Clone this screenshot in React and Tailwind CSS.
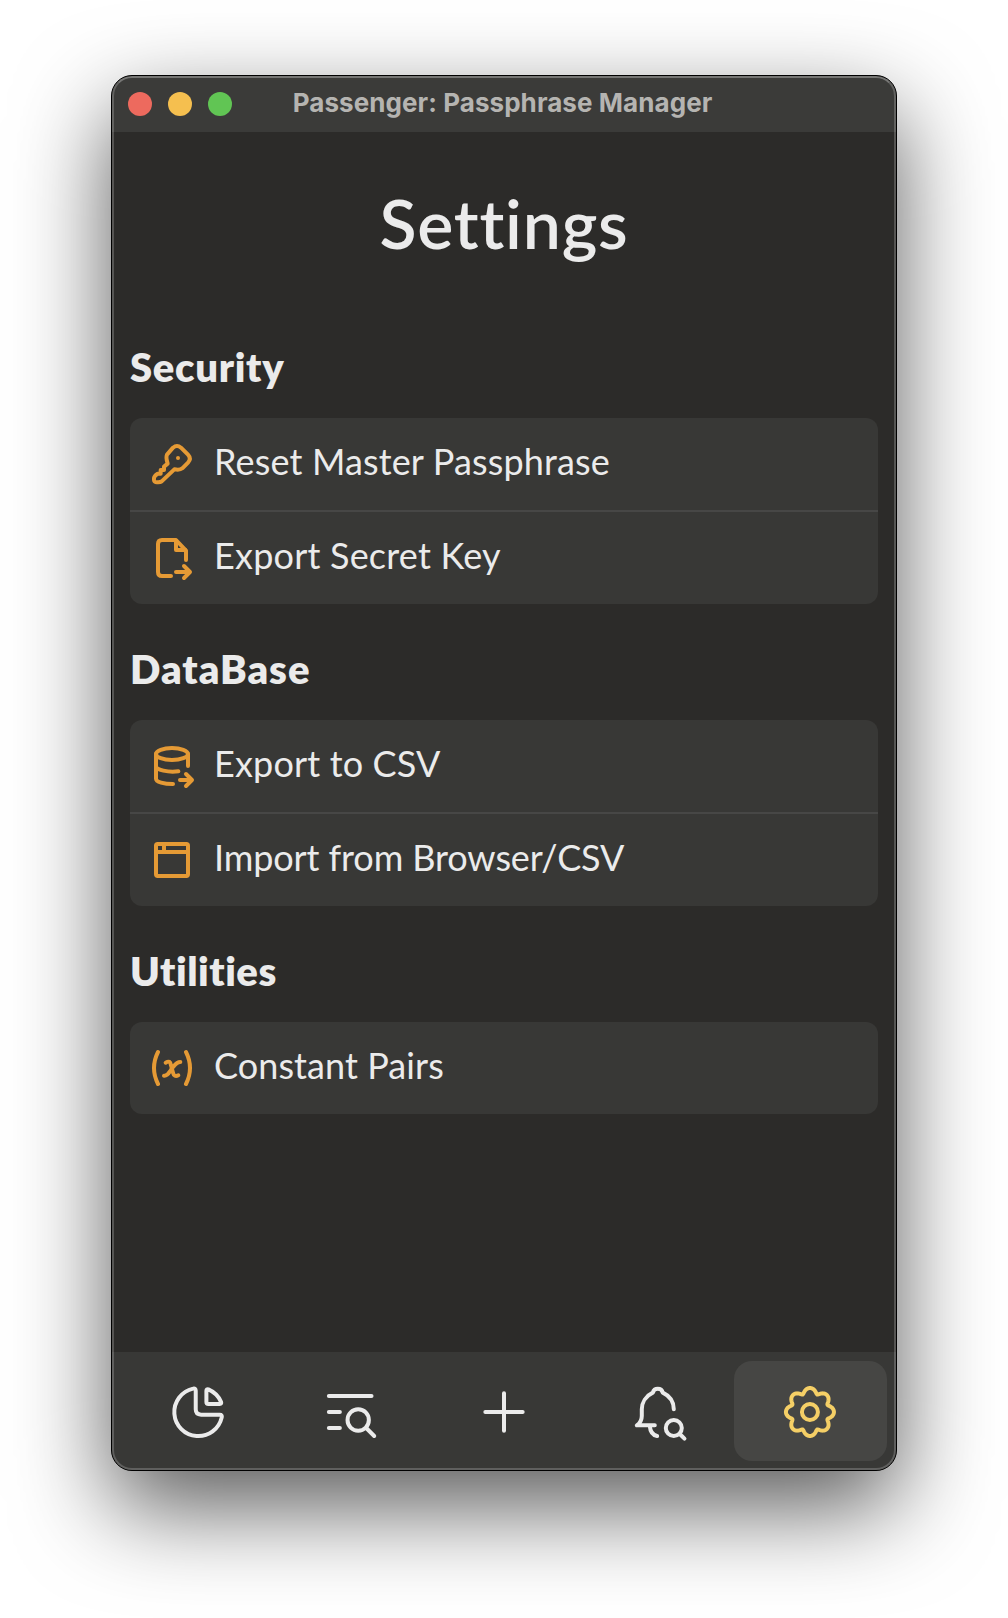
import React from "react";

const gearPath = (() => {
  const pts = [];
  for (let i = 0; i < 240; i++) {
    const t = (i / 240) * Math.PI * 2;
    const a = t + 0.05 * Math.sin(8 * t);
    const r = 64.5 + 7.5 * Math.cos(8 * t);
    pts.push(`${(930 + r * Math.cos(a)).toFixed(2)} ${(216 + r * Math.sin(a)).toFixed(2)}`);
  }
  return `M${pts.join("L")}Z`;
})();

function Icon({ viewBox, className, children }) {
  return (
    <svg
      viewBox={viewBox}
      className={className}
      fill="none"
      stroke="currentColor"
      strokeWidth="12"
      strokeLinecap="round"
      strokeLinejoin="round"
    >
      {children}
    </svg>
  );
}

const rowIcon = "size-12 shrink-0 text-[#e59a35]";
const navIcon = "size-16 shrink-0";

const KeyIcon = () => (
  <Icon viewBox="84 330 144 144" className={rowIcon}>
    <path d="M159 353Q171 343 183 353L204 374Q215 386 204 398L187 415Q180 421 163 418L125 454Q120 458 106 456Q101 454 102 444Q103 437 113 431H122V420H132V410L143 401Q137 382 141 374Z" />
    <circle cx="174" cy="384" r="6" fill="currentColor" stroke="none" />
  </Icon>
);

const FileExportIcon = () => (
  <Icon viewBox="84 612 144 144" className={rowIcon}>
    <path d="M153 738H126Q114 738 114 726V642Q114 630 126 630H168L198 662V690" />
    <path d="M168 632V660H196" />
    <path d="M168 726H208M192 708L210 726L192 744" />
  </Icon>
);

const DatabaseExportIcon = () => (
  <Icon viewBox="84 96 144 144" className={rowIcon}>
    <ellipse cx="156" cy="132" rx="48" ry="18" />
    <path d="M108 132V206C108 216 132 222 159 222M204 132V168M108 168C108 180 145 188 175 184" />
    <path d="M180 210H214M198 192L216 210L198 228" />
  </Icon>
);

const BrowserIcon = () => (
  <Icon viewBox="84 378 144 144" className={rowIcon}>
    <rect x="108" y="402" width="96" height="96" rx="5" />
    <path d="M108 426H204M132 402V426" />
  </Icon>
);

const VariableIcon = () => (
  <Icon viewBox="84 312 144 144" className={rowIcon}>
    <path d="M114 336Q90 384 114 432M198 336Q222 384 198 432" />
    <path d="M137 368C147 362 151 365 153 376L159 398C161 408 167 410 175 406" />
    <path d="M181 366C172 366 168 370 160 380L150 394C144 404 139 408 132 407" />
  </Icon>
);

const PieIcon = () => (
  <Icon viewBox="184.8 117 192 192" className={navIcon}>
    <path d="M274 152V208Q274 224 290 224H346Q354 224 352 232A72 72 0 1 1 266 146Q274 144 274 152Z" />
    <path d="M306 152V186Q306 192 312 192H346Q352 192 350 186C343 168 330 156 312 148Q306 146 306 152Z" />
  </Icon>
);

const ListSearchIcon = () => (
  <Icon viewBox="644.4 117 192 192" className={navIcon}>
    <path d="M674 168H802M674 216H707M674 264H707M786 264L810 288" />
    <circle cx="762" cy="240" r="32" />
  </Icon>
);

const PlusIcon = () => (
  <Icon viewBox="-84 117 192 192" className={navIcon}>
    <path d="M-44 216H68M12 160V272" />
  </Icon>
);

const BellSearchIcon = () => (
  <Icon viewBox="375.6 117 192 192" className={navIcon}>
    <path d="M522 208C522 185 510 168 489 158A15.5 15.5 0 0 0 459 158C438 168 426 188 426 208V228Q426 246 411 256H465M450 258Q452 284 472 288" />
    <circle cx="522" cy="264" r="24" />
    <path d="M540 282L554 296" />
  </Icon>
);

const GearIcon = () => (
  <Icon viewBox="834.2 117 192 192" className={navIcon}>
    <path d={gearPath} />
    <circle cx="930" cy="216" r="24" />
  </Icon>
);

const sections = [
  {
    title: "Security",
    spacing: "tracking-[0.7px]",
    rows: [
      { label: "Reset Master Passphrase", icon: KeyIcon, spacing: "tracking-[0.15px]" },
      { label: "Export Secret Key", icon: FileExportIcon, spacing: "tracking-[0.21px]" },
    ],
  },
  {
    title: "DataBase",
    spacing: "tracking-[1px]",
    rows: [
      { label: "Export to CSV", icon: DatabaseExportIcon, spacing: "tracking-[0.16px]" },
      { label: "Import from Browser/CSV", icon: BrowserIcon, spacing: "tracking-[-0.1px]" },
    ],
  },
  {
    title: "Utilities",
    spacing: "tracking-[0.52px]",
    rows: [{ label: "Constant Pairs", icon: VariableIcon, spacing: "tracking-[0.08px]" }],
  },
];

const navItems = [
  { name: "stats", icon: PieIcon },
  { name: "search", icon: ListSearchIcon },
  { name: "add", icon: PlusIcon },
  { name: "alerts", icon: BellSearchIcon },
  { name: "settings", icon: GearIcon, active: true },
];

export default function App() {
  return (
    <div className="h-[1618px] w-[1008px] overflow-hidden bg-white pt-[75px] pl-[111px]">
      <div className="relative flex h-[1396px] w-[786px] flex-col overflow-hidden rounded-[21px] border border-black bg-[#2c2b29] text-[#ebebeb] shadow-[0_36px_94px_rgba(0,0,0,0.65)] [font-family:Lato,'Open_Sans',sans-serif] [font-variant-ligatures:none]">
        <header className="flex h-14 shrink-0 items-center bg-[#3b3b39]">
          <div className="flex w-[150px] gap-4 pl-4">
            <span className="size-6 rounded-full bg-[#ed6a5e]" />
            <span className="size-6 rounded-full bg-[#f5bf4f]" />
            <span className="size-6 rounded-full bg-[#61c554]" />
          </div>
          <div className="flex-1 pr-[153px] pb-0.5 text-center text-[26px] leading-8 font-bold tracking-[0.07px] whitespace-nowrap text-[#b5b4b1] [font-family:Inter,sans-serif]">
            Passenger: Passphrase Manager
          </div>
        </header>

        <main className="flex-1 px-[18px]">
          <h1 className="h-[170px] pt-[51px] text-center text-[68px] leading-[80px] font-semibold tracking-[0.8px]">
            Settings
          </h1>
          {sections.map((s) => (
            <section key={s.title}>
              <h2 className={`pt-[41px] pb-[27px] text-[40px] leading-[48px] font-extrabold ${s.spacing}`}>
                {s.title}
              </h2>
              <div className="divide-y-2 divide-[#474746] overflow-hidden rounded-xl bg-[#383836]">
                {s.rows.map(({ label, icon: RowIcon, spacing }) => (
                  <div key={label} className="box-content flex h-[92px] items-center gap-[18px] pl-[18px]">
                    <RowIcon />
                    <span className={`pb-1.5 text-[36px] leading-[44px] whitespace-nowrap ${spacing}`}>{label}</span>
                  </div>
                ))}
              </div>
            </section>
          ))}
        </main>

        <nav className="flex h-[118px] shrink-0 bg-[#383836] p-[9px]">
          {navItems.map(({ name, icon: NavIcon, active }) => (
            <div
              key={name}
              className={`flex flex-1 items-center justify-center rounded-[18px] ${active ? "bg-[#464644] text-[#f5cf66]" : ""}`}
            >
              <NavIcon />
            </div>
          ))}
        </nav>
        <div className="pointer-events-none absolute inset-0 rounded-[20px] border-2 border-t-white/30 border-r-white/20 border-b-white/20 border-l-white/20" />
      </div>
    </div>
  );
}
